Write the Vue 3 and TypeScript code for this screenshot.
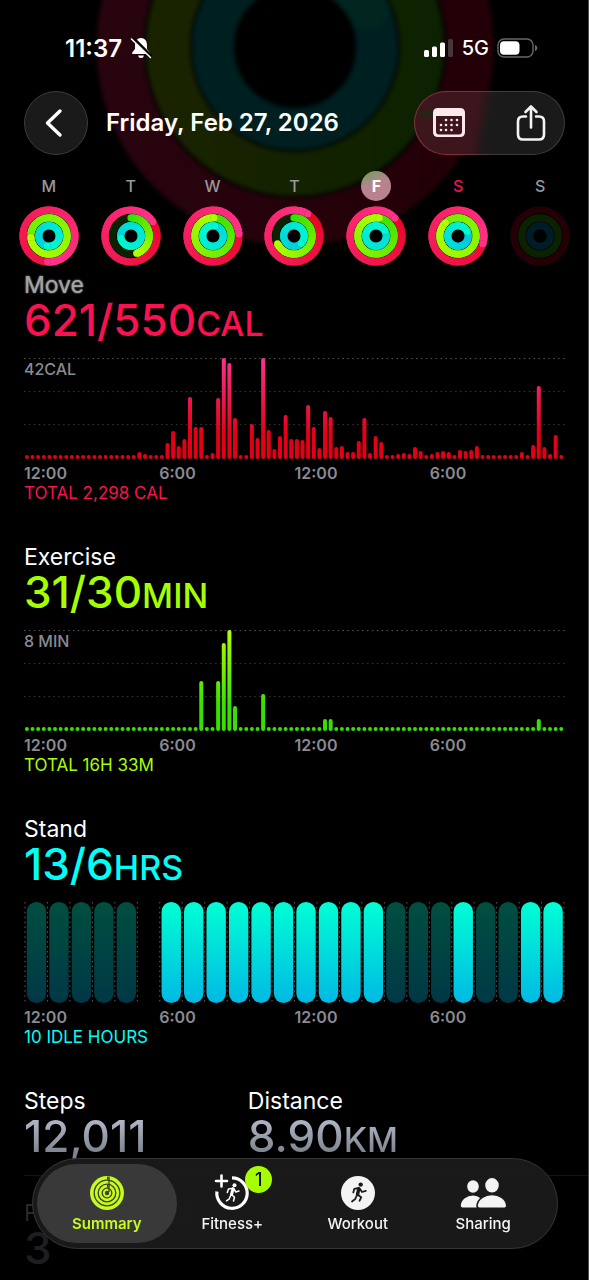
<script setup lang="ts">
interface Day {
  letter: string
  name: string
  move: number
  exercise: number
  stand: number
  kind?: 'selected' | 'today' | 'empty'
}

interface Segment {
  d: string
  color: string
}

interface Ring {
  r: number
  track: string
  segments: Segment[]
  cap?: { x: number; y: number; color: string; shadow: boolean }
  start?: string
}

type Rgb = [number, number, number]

const days: Day[] = [
  { letter: 'M', name: 'Monday', move: 1.51, exercise: 1.74, stand: 1.53 },
  { letter: 'T', name: 'Tuesday', move: 1.16, exercise: 0.45, stand: 1.72 },
  { letter: 'W', name: 'Wednesday', move: 1.24, exercise: 1.01, stand: 2.03 },
  { letter: 'T', name: 'Thursday', move: 1.09, exercise: 0.68, stand: 1.38 },
  { letter: 'F', name: 'Friday', move: 1.13, exercise: 1.03, stand: 2.17, kind: 'selected' },
  { letter: 'S', name: 'Saturday', move: 1.3, exercise: 1.88, stand: 1.18, kind: 'today' },
  { letter: 'S', name: 'Sunday', move: 0, exercise: 0, stand: 0, kind: 'empty' },
]

const C = 30
const mix = (a: Rgb, b: Rgb, t: number) =>
  `rgb(${a.map((v, i) => Math.round(v + (b[i] - v) * t)).join(',')})`

const point = (r: number, turn: number) => {
  const a = turn * Math.PI * 2
  return { x: +(C + r * Math.sin(a)).toFixed(2), y: +(C - r * Math.cos(a)).toFixed(2) }
}

function buildRing(r: number, p: number, from: Rgb, to: Rgb, track: string): Ring {
  if (p === 0) return { r, track, segments: [] }
  const begin = Math.max(0, p - 1)
  const steps = 36
  const segments: Segment[] = []
  for (let i = 0; i < steps; i++) {
    const t0 = begin + ((p - begin) * i) / steps
    const t1 = begin + ((p - begin) * (i + 1)) / steps
    const a = point(r, t0)
    const b = point(r, Math.min(t1 + 0.03, p))
    segments.push({ d: `M${a.x} ${a.y}A${r} ${r} 0 0 1 ${b.x} ${b.y}`, color: mix(from, to, t1 / p) })
  }
  return {
    r,
    track,
    segments,
    cap: { ...point(r, p), color: mix(from, to, 1), shadow: p > 1 },
    start: p < 1 ? mix(from, to, 0) : undefined,
  }
}

const weekRings = days.map((d) => [
  buildRing(26, d.move, [228, 0, 24], [255, 50, 138], '#230006'),
  buildRing(18.2, d.exercise, [56, 224, 0], [176, 255, 0], '#0a2200'),
  buildRing(10.3, d.stand, [0, 184, 228], [0, 250, 208], '#001c26'),
])

const SLOTS = 96
const PITCH = 540 / SLOTS
const moveBars = [
  ...Array<number>(20).fill(4),
  7, 5, 4, 4, 4, 16, 28, 13, 20, 62, 32, 32, 4, 6, 61, 101, 96, 41, 4, 4,
  35, 21, 101, 29, 10, 23, 44, 20, 20, 19, 54, 32, 11, 48, 42, 12, 13, 7, 7, 18,
  41, 6, 23, 17, 4, 4, 5, 6, 5, 12, 8, 4, 5, 7, 8, 7, 4, 9, 8, 9,
  13, 4, 4, 4, 4, 4, 4, 4, 7, 4, 14, 73, 12, 5, 24, 4,
]
const exerciseMinutes: Record<number, number> = {
  31: 50, 34: 50, 35: 88, 36: 101, 37: 25, 42: 37, 53: 12, 54: 12, 91: 12,
}
const exerciseBars = Array.from({ length: SLOTS }, (_, i) => exerciseMinutes[i] ?? 4)

const charts = [
  { id: 'move', title: 'Move', value: '621/550', unit: 'CAL', peak: '42CAL', total: 'TOTAL 2,298 CAL', bars: moveBars, low: '#e30016', high: '#ff3090' },
  { id: 'exercise', title: 'Exercise', value: '31/30', unit: 'MIN', peak: '8 MIN', total: 'TOTAL 16H 33M', bars: exerciseBars, low: '#38e000', high: '#b2ff00' },
]

const hours = ['12:00', '6:00', '12:00', '6:00']
const standHours = 'iiiii-aaaaaaaaaaiiiaiiaa'.split('')
</script>

<template>
  <div class="page">
    <svg class="glow" viewBox="0 0 400 246" aria-hidden="true">
      <defs>
        <linearGradient id="glow-red" x1="0" x2="1">
          <stop offset="0" stop-color="#28040f" />
          <stop offset="1" stop-color="#230007" />
        </linearGradient>
        <linearGradient id="glow-green" x1="0" x2="1">
          <stop offset="0" stop-color="#1a2300" />
          <stop offset="1" stop-color="#0d2200" />
        </linearGradient>
      </defs>
      <g fill="none">
        <circle cx="200" cy="47" r="175" stroke="url(#glow-red)" stroke-width="47" />
        <circle cx="200" cy="47" r="127" stroke="url(#glow-green)" stroke-width="44" />
        <circle cx="200" cy="47" r="82" stroke="#001f20" stroke-width="42" />
        <path d="M230 -29A82 82 0 0 1 273 9" stroke="#00261f" stroke-width="42" stroke-linecap="round" />
      </g>
    </svg>

    <header>
      <div class="status">
        <div class="status-side">
          <time class="clock">11:37</time>
          <svg width="22" height="22" viewBox="0 0 22 22" aria-label="Silent mode">
            <path d="M11 1C7.200 1 5 4 5 8V12L2.200 15.500Q1.600 17 3 17H19Q20.400 17 19.800 15.500L17 12V8C17 4 14.800 1 11 1ZM8 18.500H14Q13.600 21 11 21Q8.400 21 8 18.500Z" fill="#fff" />
            <path d="M2.500 .8L22 20.300" stroke="#080a02" stroke-width="3.600" />
            <path d="M1.500 2L20.500 20.500" stroke="#fff" stroke-width="1.600" stroke-linecap="round" />
          </svg>
        </div>
        <div class="status-side right">
          <svg width="30" height="20" viewBox="0 0 30 20" aria-label="Signal">
            <rect x="0" y="12" width="5" height="7" rx="1.500" fill="#fff" />
            <rect x="8" y="8.500" width="5" height="10.500" rx="1.500" fill="#fff" />
            <rect x="16" y="4.500" width="5" height="14.500" rx="1.500" fill="#fff" />
            <rect x="24" y="1" width="5" height="18" rx="1.500" fill="#44383b" />
          </svg>
          <span class="network">5G</span>
          <svg width="41" height="20" viewBox="0 0 41 20" aria-label="Battery">
            <rect x="1" y="1" width="35" height="18" rx="6" fill="none" stroke="#67676a" stroke-width="1.400" />
            <rect x="3" y="3.200" width="19.500" height="13.600" rx="4" fill="#fff" />
            <path d="M38 7Q40.500 8 40.500 10Q40.500 12 38 13Z" fill="#67676a" />
          </svg>
        </div>
      </div>

      <div class="toolbar">
        <button class="round" type="button" aria-label="Back">
          <svg width="20" height="30" viewBox="0 0 20 30">
            <path d="M16 3L3.500 15L16 27" fill="none" stroke="#fff" stroke-width="3.400" stroke-linecap="round" stroke-linejoin="round" />
          </svg>
        </button>
        <h1>Friday, Feb 27, 2026</h1>
        <div class="actions">
          <button type="button" aria-label="Calendar">
            <svg width="34" height="32" viewBox="0 0 34 32">
              <path fill-rule="evenodd" d="M6 1H28Q33 1 33 6V25Q33 30 28 30H6Q1 30 1 25V6Q1 1 6 1ZM4 9V24.500Q4 27.500 7 27.500H27Q30 27.500 30 24.500V9Z" fill="#ffe9ee" />
              <g fill="#ffe9ee">
                <circle v-for="x in [14, 19.5, 25]" :key="'a' + x" :cx="x" cy="13" r="1.300" />
                <circle v-for="x in [9, 14, 19.5, 25]" :key="'b' + x" :cx="x" cy="18" r="1.300" />
                <circle v-for="x in [9, 14, 19.5]" :key="'c' + x" :cx="x" cy="23" r="1.300" />
              </g>
            </svg>
          </button>
          <button type="button" aria-label="Share">
            <svg width="30" height="38" viewBox="0 0 30 38">
              <g fill="none" stroke="#f4f4f4" stroke-width="2.600" stroke-linecap="round" stroke-linejoin="round">
                <path d="M10 12.500H7Q2 12.500 2 17.500V30.500Q2 35.500 7 35.500H23Q28 35.500 28 30.500V17.500Q28 12.500 23 12.500H20" />
                <path d="M15 23.500V2.500M9.500 8L15 2.500L20.500 8" />
              </g>
            </svg>
          </button>
        </div>
      </div>

      <div class="week">
        <button v-for="(day, i) in days" :key="i" type="button" class="day" :class="day.kind" :aria-label="day.name">
          <span class="letter">{{ day.letter }}</span>
          <svg class="rings" viewBox="0 0 60 60">
            <circle cx="30" cy="30" r="29.500" :fill="day.kind === 'empty' ? 'none' : '#000'" fill-opacity=".8" />
            <g v-for="ring in weekRings[i]" :key="ring.r" fill="none" stroke-width="7.200">
              <circle cx="30" cy="30" :r="ring.r" :stroke="ring.track" />
              <circle v-if="ring.start" cx="30" :cy="30 - ring.r" r="3.600" :fill="ring.start" stroke="none" />
              <path v-for="(s, k) in ring.segments" :key="k" :d="s.d" :stroke="s.color" />
              <template v-if="ring.cap">
                <circle v-if="ring.cap.shadow" :cx="ring.cap.x" :cy="ring.cap.y" r="3.800" fill="#000" fill-opacity=".2" stroke="none" />
                <circle :cx="ring.cap.x" :cy="ring.cap.y" r="3.500" :fill="ring.cap.color" stroke="none" />
              </template>
            </g>
          </svg>
        </button>
      </div>
    </header>

    <main>
      <section v-for="chart in charts" :key="chart.id" class="metric" :class="chart.id">
        <h2>{{ chart.title }}</h2>
        <p class="value">{{ chart.value }}<span>{{ chart.unit }}</span></p>
        <div class="chart">
          <svg viewBox="0 0 541 101" role="img" :aria-label="chart.title + ' by time of day'">
            <defs>
              <linearGradient :id="'fill-' + chart.id" gradientUnits="userSpaceOnUse" x1="0" y1="101" x2="0" y2="0">
                <stop offset="0" :stop-color="chart.low" />
                <stop offset=".25" :stop-color="chart.low" />
                <stop offset="1" :stop-color="chart.high" />
              </linearGradient>
            </defs>
            <path class="grid top" d="M0 .6H541" />
            <path class="grid" d="M0 33.600H541M0 66.600H541" />
            <rect
              v-for="(h, i) in chart.bars"
              :key="i"
              :x="i * PITCH + 0.9"
              :y="101 - h"
              width="4"
              :height="h"
              rx="2"
              :fill="`url(#fill-${chart.id})`"
            />
          </svg>
          <span class="peak">{{ chart.peak }}</span>
        </div>
        <div class="axis"><span v-for="(h, i) in hours" :key="i">{{ h }}</span></div>
        <p class="total">{{ chart.total }}</p>
      </section>

      <section class="metric stand">
        <h2>Stand</h2>
        <p class="value">13/6<span>HRS</span></p>
        <div class="chart">
          <svg viewBox="0 0 541 101" role="img" aria-label="Stand hours">
            <defs>
              <linearGradient id="stand-active" x1="0" y1="0" x2="0" y2="1">
                <stop offset="0" stop-color="#00ffd4" />
                <stop offset="1" stop-color="#00b9e4" />
              </linearGradient>
              <linearGradient id="stand-idle" x1="0" y1="0" x2="0" y2="1">
                <stop offset="0" stop-color="#004f40" />
                <stop offset="1" stop-color="#003846" />
              </linearGradient>
            </defs>
            <path v-for="n in 25" :key="'l' + n" class="grid top" :d="`M${1 + (n - 1) * 22.46} 0V100`" />
            <template v-for="(h, i) in standHours" :key="i">
              <rect
                v-if="h !== '-'"
                :x="2.8 + i * 22.46"
                y="0"
                width="19.400"
                height="101"
                rx="9.700"
                :fill="h === 'a' ? 'url(#stand-active)' : 'url(#stand-idle)'"
              />
            </template>
          </svg>
        </div>
        <div class="axis"><span v-for="(h, i) in hours" :key="i">{{ h }}</span></div>
        <p class="total">10 IDLE HOURS</p>
      </section>

      <div class="pair">
        <section>
          <h2>Steps</h2>
          <p class="value">12,011</p>
        </section>
        <section>
          <h2>Distance</h2>
          <p class="value">8.90<span>KM</span></p>
        </section>
      </div>
      <section class="faded">
        <h2>Flights Climbed</h2>
        <p class="value">3</p>
      </section>
    </main>

    <nav class="tabs">
      <a href="#summary" class="active" aria-current="page">
        <svg width="34" height="34" viewBox="0 0 34 34">
          <circle cx="17" cy="17" r="17" fill="#c6fb20" />
          <g fill="none" stroke="#3b3f24" stroke-width="1.300">
            <circle cx="17" cy="17" r="12.800" />
            <circle cx="17" cy="17" r="8.800" />
            <circle cx="17" cy="17" r="4.800" />
            <path d="M19 .5V16" />
          </g>
          <path d="M17 0V4.200L19 2.200ZM17 8.300V12.300L19 10.300Z" fill="#3b3f24" />
          <circle cx="17" cy="17" r="2.200" fill="#3b3f24" />
        </svg>
        <span>Summary</span>
      </a>
      <a href="#fitness">
        <span class="icon">
          <svg width="34" height="34" viewBox="0 0 34 34">
            <g fill="none" stroke="#fff" stroke-linecap="round" stroke-linejoin="round">
              <path d="M17 1.900A15.200 15.200 0 1 1 1.900 15.500" stroke-width="3.200" stroke-linecap="butt" />
              <path d="M6.500 -.5V10.500M1 5H12" stroke-width="2.600" />
              <path d="M18 12.800L16.500 18.500" stroke-width="3" />
              <path d="M18 12.300L13.500 13L12.300 16.500M19 13L20.800 16L24 15M16.500 18.500L19.500 21.300L18.500 25M15.500 19.800L14.300 22.800L11.500 24.800" stroke-width="1.500" />
            </g>
            <circle cx="19.500" cy="9.200" r="2" fill="#fff" />
          </svg>
          <b class="badge">1</b>
        </span>
        <span>Fitness+</span>
      </a>
      <a href="#workout">
        <svg width="34" height="34" viewBox="0 0 34 34">
          <circle cx="17" cy="17" r="17" fill="#f4f4f4" />
          <g fill="none" stroke="#1a1a1a" stroke-linecap="round" stroke-linejoin="round">
            <path d="M17.800 12.800L16.500 18.500" stroke-width="3.400" />
            <path d="M18 12L13.300 12.800L12.300 16.500M19 13L21 16L24.800 14.800M16.500 18.500L20.200 21.300L18.500 24.800M15.500 20L14.300 23L11 25.500" stroke-width="1.800" />
          </g>
          <circle cx="19.700" cy="8.600" r="2.200" fill="#1a1a1a" />
        </svg>
        <span>Workout</span>
      </a>
      <a href="#sharing">
        <svg width="48" height="34" viewBox="0 0 48 34">
          <g fill="#f4f4f4" stroke="#1a1a1a" stroke-width="1.600">
            <ellipse cx="14" cy="10.500" rx="6.600" ry="7" />
            <path d="M3.500 32.200Q1 32.200 1 29.500C1.600 23 7.500 18.800 14 18.800S25 23 25.600 29.500Q25.600 32.200 23.500 32.200Z" />
            <ellipse cx="33" cy="9.300" rx="7.600" ry="8" />
            <path d="M20.500 32.200Q18 32.200 18 29.500C19 22.500 26 18.500 33 18.500S47 22.500 47.800 29.500Q47.800 32.200 45.500 32.200Z" />
          </g>
        </svg>
        <span>Sharing</span>
      </a>
    </nav>
  </div>
</template>

<style>
html,
body {
  background: #000;
}
</style>

<style scoped>
.page {
  position: relative;
  min-height: 100vh;
  overflow: hidden;
  box-sizing: border-box;
  background: #000;
  color: #fff;
  font-family: Inter, "Liberation Sans", sans-serif;
}
.page::after {
  content: "";
  position: absolute;
  inset: 0 0 0 auto;
  width: 1px;
  background: #4c4c4e;
}
h1, h2, p { margin: 0; font-weight: 400; }
button {
  margin: 0;
  padding: 0;
  border: 0;
  background: none;
  color: inherit;
  font: inherit;
}
svg { display: block; }

.glow {
  position: absolute;
  top: 0;
  left: 50%;
  width: 400px;
  margin-left: -200px;
  overflow: visible;
  filter: blur(2px);
}
header { position: relative; }

.status {
  display: flex;
  justify-content: space-between;
  padding: 32px 51px 0 65px;
}
.status-side {
  display: flex;
  align-items: center;
  gap: 8px;
  height: 32px;
}
.clock { font-size: 24px; font-weight: 600; }
.network { font-size: 20px; font-weight: 500; }

.toolbar {
  display: flex;
  align-items: center;
  margin-top: 27px;
  padding: 0 24px;
}
.round {
  display: grid;
  place-items: center;
  box-sizing: border-box;
  width: 64px;
  height: 64px;
  padding-right: 4px;
  border: 1px solid #3c3c3c;
  border-radius: 50%;
  background: #1a1a1a;
}
h1 {
  flex: 1;
  margin-left: 18px;
  font-size: 24px;
  font-weight: 600;
  line-height: 32px;
  white-space: nowrap;
}
.actions {
  display: flex;
  justify-content: space-between;
  align-items: center;
  box-sizing: border-box;
  width: 151px;
  height: 64px;
  padding: 0 18px 0 17px;
  border: 1px solid transparent;
  border-radius: 32px;
  background:
    radial-gradient(ellipse at 15px 22px, #1d2a10 0, #1d2a1000 20px) padding-box,
    linear-gradient(100deg, #3d151c 40%, #1a1a1a 50%) padding-box,
    linear-gradient(100deg, #84303c 35%, #3c3c3c 55%) border-box;
}

.week {
  display: grid;
  grid-template-columns: repeat(7, 1fr);
  margin-top: 16px;
  padding: 0 8px;
}
.day {
  display: flex;
  flex-direction: column;
  align-items: center;
  gap: 5px;
  color: #98989c;
}
.letter {
  width: 30px;
  font-size: 16px;
  font-weight: 500;
  line-height: 30px;
  border-radius: 50%;
}
.selected .letter {
  color: #fff;
  font-weight: 700;
  background: linear-gradient(160deg, #86976d 15%, #b8838e 45%);
}
.today .letter { color: #fa114f; }
.rings { width: 60px; }

main {
  position: relative;
  margin-top: 6px;
  padding: 0 24px;
}
.metric { margin-bottom: 41px; }
h2 { font-size: 23px; line-height: 26px; }
.move h2 {
  color: #a4a4a4;
  text-shadow: 0 0 2px #a4a4a4;
}
.value {
  height: 44px;
  font-size: 44px;
  font-weight: 500;
  line-height: 44px;
  white-space: nowrap;
}
.value span { font-size: 34px; line-height: 1; }
.move .value, .move .total { color: #fa114f; }
.exercise .value, .exercise .total { color: #a6ff00; }
.stand .value, .stand .total { color: #00fff6; }

.chart {
  position: relative;
  margin-top: 16px;
}
.chart svg { width: 100%; }
.grid { stroke: #3a3a3c; stroke-width: 1; stroke-dasharray: 1.5 3.4; }
.grid.top { stroke: #5c5c5f; }
.peak {
  position: absolute;
  top: 1px;
  left: 0;
  font-size: 16px;
  font-weight: 500;
  line-height: 20px;
  color: #8a8a90;
}
.axis {
  display: grid;
  grid-template-columns: repeat(4, 1fr);
  margin-top: 4px;
  font-size: 16px;
  font-weight: 600;
  line-height: 20px;
  color: #8a8a90;
}
.total { font-size: 17px; line-height: 20px; }

.pair {
  display: grid;
  grid-template-columns: 12fr 17fr;
}
.pair .value {
  height: 54px;
  margin-bottom: -10px;
  background: linear-gradient(#adb3c2 15%, #7b828c 75%);
  background-clip: text;
  color: transparent;
}
.faded {
  margin: 17px -24px 0 0;
  padding-top: 24px;
  border-top: 1px solid #141415;
}
.faded h2 { color: #2a2a2a; }
.faded .value { color: #1d1e20; }
.faded > * { margin-left: 0; }

.tabs {
  position: fixed;
  right: 31px;
  bottom: 31px;
  left: 32px;
  display: flex;
  box-sizing: border-box;
  height: 91px;
  padding: 0 11px;
  border: 1px solid #363638;
  border-radius: 46px;
  background: #1a1a1af2;
}
.tabs a {
  position: relative;
  display: flex;
  flex: 1;
  flex-direction: column;
  align-items: center;
  gap: 4px;
  padding-top: 17px;
  color: #f4f4f4;
  font-size: 15px;
  font-weight: 500;
  line-height: 20px;
  text-decoration: none;
}
.tabs a > * { position: relative; }
.tabs .active { color: #c6fb20; font-weight: 600; }
.tabs .active::before {
  content: "";
  position: absolute;
  inset: 5px -7px;
  border-radius: 40px;
  background: #3b3b3cf2;
}
.icon svg { overflow: visible; }
.badge {
  position: absolute;
  top: -10px;
  right: -23px;
  width: 27px;
  border-radius: 50%;
  background: #a6ff00;
  color: #111;
  font-size: 18px;
  font-weight: 500;
  line-height: 27px;
  text-align: center;
}
</style>
